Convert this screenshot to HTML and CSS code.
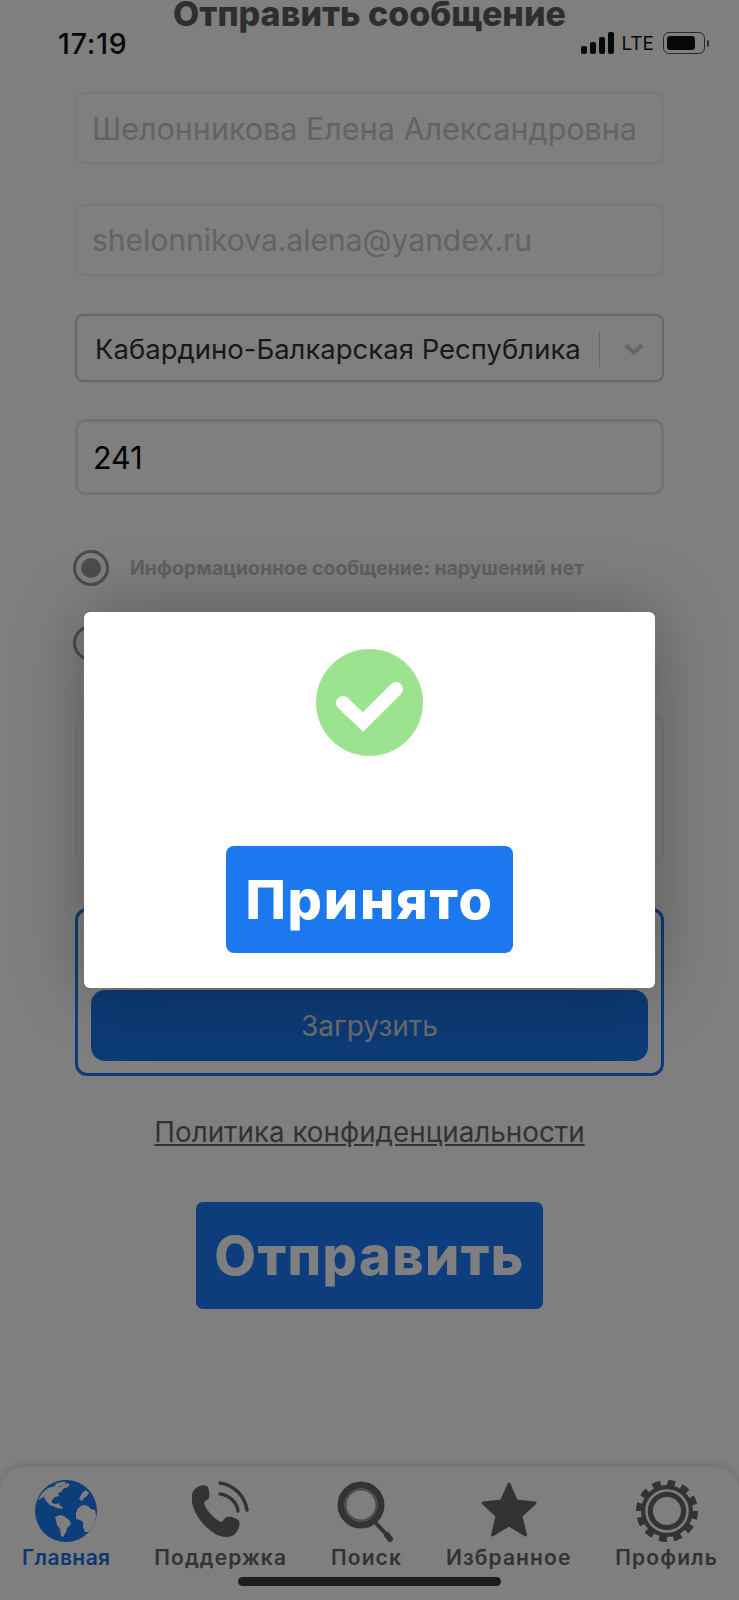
FILE: index.html
```html
<!DOCTYPE html>
<html lang="ru">
<head>
    <meta charset="UTF-8">
    <meta name="viewport" content="width=device-width, initial-scale=1.0">
    <title>Отправить сообщение</title>
    <link rel="stylesheet" href="styles.css">
</head>
<body>
    <div class="status-bar">
        <span class="status-time">17:19</span>
        <div class="status-icons">
            <div class="signal"><i class="bar-1"></i><i class="bar-2"></i><i class="bar-3"></i><i class="bar-4"></i></div>
            <span class="status-lte">LTE</span>
            <div class="battery"><i class="battery-level"></i></div>
            <i class="battery-nub"></i>
        </div>
    </div>

    <h1 class="page-title">Отправить сообщение</h1>

    <form class="form">
        <input class="field field-name" type="text" value="Шелонникова Елена Александровна" disabled>
        <input class="field field-email" type="text" value="shelonnikova.alena@yandex.ru" disabled>
        <div class="select">
            <span class="select-value">Кабардино-Балкарская Республика</span>
            <span class="select-sep"></span>
            <svg class="select-arrow" viewBox="0 0 20 12"><path d="M2 2l8 8 8-8"/></svg>
        </div>
        <input class="field field-code" type="text" value="241">
        <div class="radio-row radio-row-first">
            <span class="radio radio-on"></span>
            <span class="radio-label">Информационное сообщение: нарушений нет</span>
        </div>
        <div class="radio-row radio-row-second">
            <span class="radio"></span>
        </div>
        <div class="textarea"></div>
        <div class="upload-box">
            <button class="upload-button" type="button">Загрузить</button>
        </div>
        <a class="policy-link" href="#">Политика конфиденциальности</a>
        <button class="submit-button" type="button">Отправить</button>
    </form>

    <nav class="tabbar">
        <a class="tab tab-active">
            <svg class="tab-icon" width="62" height="62" viewBox="0 0 62 62">
                <circle class="globe-sea" cx="31" cy="31" r="31"/>
                <path class="globe-land" d="M3 20l4-7 6-5 7-2 5 1 3-2 5-2 2 2-4 3-2 0-3 4-3 1 1 3-4 1-3 3 0 3 4 1 3-1 1 3 3 1-1 2-5-1-4-2-3-1-4-4-2-4z"/>
                <path class="globe-land" d="M20 37l5-2 4 1 5 4 2 4-4 4-1 4-3 5-2-1-1-7-3-4-1-5z"/>
                <path class="globe-land" d="M41 33l2-5 5-3 5 1 3 3 4 1 1 6-1 6-3 6-4 4-3 0-2-5 0-5-3-2-4-1z"/>
                <path class="globe-land" d="M44 19l3-6 4-3 3 3-2 3-3 2-2 3z"/>
                <path class="globe-land" d="M20 4l6-2 5 0-1 2-4 2-5 1z"/>
            </svg>
            <span>Главная</span>
        </a>
        <a class="tab">
            <svg class="tab-icon" width="58" height="62" viewBox="0 0 58 62">
                <path class="icon-fill" d="M2 10c3-4 10-6 13-4 2 2 3 9 2 12-1 2-5 3-5 5 1 6 11 17 17 19 2 0 3-4 6-5 3-1 10 1 12 4 2 3-1 10-4 13-3 3-9 4-15 2C16 52 2 36 0 22c-1-5 0-9 2-12z"/>
                <path class="icon-line" d="M28 3c14 2 25 13 27 27"/>
                <path class="icon-line" d="M28 14c9 1 17 8 18 17"/>
            </svg>
            <span>Поддержка</span>
        </a>
        <a class="tab">
            <svg class="tab-icon" width="58" height="62" viewBox="0 0 58 62">
                <circle class="search-ring" cx="24" cy="25" r="20"/>
                <circle class="search-inner" cx="24" cy="25" r="15.500"/>
                <path class="search-handle" d="M38 42l10 11"/>
                <path class="search-tip" d="M50 55l3 4"/>
            </svg>
            <span>Поиск</span>
        </a>
        <a class="tab">
            <svg class="tab-icon" width="58" height="62" viewBox="0 0 58 62">
                <path class="star" d="M29 4l7.500 17 18.500 2-14 13 4.500 19L29 45 12.500 55l4.500-19L3 23l18.500-2z"/>
            </svg>
            <span>Избранное</span>
        </a>
        <a class="tab">
            <svg class="tab-icon" width="62" height="62" viewBox="0 0 62 62">
                <circle class="gear-teeth" cx="31" cy="31" r="27" pathLength="24"/>
                <circle class="icon-fill" cx="31" cy="31" r="26"/>
                <circle class="gear-gap" cx="31" cy="31" r="20.500"/>
                <circle class="gear-hole" cx="31" cy="31" r="14"/>
            </svg>
            <span>Профиль</span>
        </a>
    </nav>
    <div class="home-indicator"></div>

    <div class="overlay">
        <div class="modal">
            <svg class="modal-check" width="107" height="107" viewBox="0 0 107 107">
                <circle class="check-bg" cx="53.500" cy="53.500" r="53.500"/>
                <path class="check-mark" d="M27 54l20 19 33-33"/>
            </svg>
            <button class="accept-button" type="button">Принято</button>
        </div>
    </div>
</body>
</html>
```

FILE: styles.css
```css
* {
    box-sizing: border-box;
}
html, body {
    margin: 0;
    height: 1600px;
    overflow: hidden;
}
body {
    display: flex;
    flex-direction: column;
    position: relative;
    background-color: white;
    font-family: Inter, "Liberation Sans", sans-serif;
    color: black;
}

/* status bar sits on top of the title */
.status-bar {
    position: absolute;
    top: 28px;
    left: 58px;
    right: 30px;
    height: 30px;
    display: flex;
    align-items: center;
    justify-content: space-between;
    z-index: 2;
}
.status-time {
    font-size: 28.500px;
    font-weight: 500;
    letter-spacing: 0.8px;
    color: #111;
}
.status-icons {
    display: flex;
    align-items: center;
}
.signal {
    display: flex;
    align-items: flex-end;
    gap: 3px;
    height: 22px;
    margin-right: 7px;
}
.signal i {
    width: 6px;
    background-color: #111;
    border-radius: 2px;
}
.bar-1 { height: 8px; }
.bar-2 { height: 12px; }
.bar-3 { height: 17px; }
.bar-4 { height: 22px; }
.status-lte {
    font-size: 19px;
    color: #111;
    margin-right: 9px;
}
.battery {
    width: 42px;
    height: 22px;
    padding: 3px;
    border: 1.500px solid #555;
    border-radius: 6px;
}
.battery-level {
    display: block;
    width: 28px;
    height: 100%;
    background-color: #111;
    border-radius: 3px;
}
.battery-nub {
    width: 2px;
    height: 7px;
    margin-left: 2px;
    background-color: #555;
    border-radius: 0 2px 2px 0;
}

.page-title {
    margin: 0;
    height: 30px;
    line-height: 28px;
    font-size: 34px;
    font-weight: 800;
    text-align: center;
    color: #5c5c5c;
}

.form {
    display: flex;
    flex-direction: column;
    padding: 62px 75px 0;
}
.field {
    width: 100%;
    height: 72px;
    padding: 0 15px;
    border: 2px solid #f0f0f0;
    border-radius: 10px;
    background-color: white;
    font-family: Inter, "Liberation Sans", sans-serif;
    font-size: 30.500px;
    color: black;
}
.field:disabled {
    color: #c6c6c6;
    opacity: 1;
}
.field-email {
    margin-top: 40px;
    font-size: 30px;
}
.select {
    display: flex;
    align-items: center;
    height: 68px;
    margin-top: 38px;
    padding: 2px 18px 0;
    border: 2px solid #d0d0d0;
    border-radius: 8px;
    color: #333;
}
.select-value {
    font-size: 27.500px;
    white-space: nowrap;
}
.select-sep {
    width: 1px;
    height: 36px;
    margin-left: 18px;
    background-color: #ccc;
}
.select-arrow {
    width: 20px;
    height: 12px;
    margin-left: 24px;
}
.select-arrow path {
    fill: none;
    stroke: #ccc;
    stroke-width: 4;
}
.field-code {
    height: 76px;
    margin-top: 37px;
    border: 3px solid #dfe6e6;
}
.radio-row {
    display: flex;
    align-items: center;
    height: 36px;
}
.radio-row-first {
    margin-top: 55px;
}
.radio-row-second {
    margin-top: 39px;
}
.radio {
    display: flex;
    align-items: center;
    justify-content: center;
    width: 36px;
    height: 36px;
    margin-left: -2px;
    border: 3px solid #999;
    border-radius: 50%;
}
.radio-on::after {
    content: "";
    width: 20px;
    height: 20px;
    background-color: #999;
    border-radius: 50%;
}
.radio-label {
    margin-left: 21px;
    font-size: 19.400px;
    font-weight: 700;
    color: #c0c0c0;
    white-space: nowrap;
}
.textarea {
    height: 147px;
    margin-top: 55px;
    border: 2px solid #eee;
    border-radius: 10px;
}
.upload-box {
    display: flex;
    align-items: flex-end;
    height: 168px;
    margin-top: 45px;
    padding: 0 13px 12px;
    border: 3px solid #1a7af0;
    border-radius: 12px;
}
.upload-button {
    width: 100%;
    height: 71px;
    border: none;
    border-radius: 14px;
    background-color: #1a76ec;
    font-family: Inter, "Liberation Sans", sans-serif;
    font-size: 28px;
    color: #d8d8d8;
}
.policy-link {
    margin-top: 41px;
    height: 30px;
    line-height: 30px;
    font-size: 27.800px;
    text-align: center;
    color: #666;
    text-decoration: underline;
}
.submit-button {
    align-self: center;
    width: 347px;
    height: 107px;
    margin-top: 55px;
    border: none;
    border-radius: 7px;
    background-color: #1a7af8;
    font-family: Inter, "Noto Sans", sans-serif;
    font-size: 54px;
    font-weight: 800;
    letter-spacing: 1.400px;
    color: white;
}

.tabbar {
    display: flex;
    justify-content: space-between;
    margin-top: auto;
    height: 133px;
    padding: 13px 21px 0 22px;
    border-radius: 24px 24px 0 0;
    background-color: white;
    box-shadow: 0 -3px 10px rgba(0, 0, 0, 0.12);
}
.tab {
    display: flex;
    flex-direction: column;
    align-items: center;
    font-size: 21px;
    font-weight: 600;
    letter-spacing: 1.100px;
    line-height: 26px;
    color: #666;
}
.tab-active {
    letter-spacing: 0.4px;
    color: #1a6fdc;
}
.tab-icon {
    margin-bottom: 3px;
}
.icon-fill {
    fill: #666;
}
.icon-line {
    fill: none;
    stroke: #666;
    stroke-width: 3.500;
    stroke-linecap: round;
}
.globe-sea {
    fill: #1c7cf4;
}
.globe-land {
    fill: white;
}
.search-ring {
    fill: none;
    stroke: #666;
    stroke-width: 7;
}
.search-inner {
    fill: none;
    stroke: #999;
    stroke-width: 2;
}
.search-handle {
    stroke: #666;
    stroke-width: 4;
}
.search-tip {
    stroke: #666;
    stroke-width: 6;
    stroke-linecap: round;
}
.star {
    fill: #666;
    stroke: #666;
    stroke-width: 3;
    stroke-linejoin: round;
}
.gear-teeth {
    fill: none;
    stroke: #666;
    stroke-width: 8;
    stroke-dasharray: 1.100 0.900;
}
.gear-gap {
    fill: none;
    stroke: white;
    stroke-width: 2.500;
}
.gear-hole {
    fill: white;
}
.home-indicator {
    position: absolute;
    left: 238px;
    bottom: 14px;
    width: 263px;
    height: 9px;
    background-color: #3a3a3a;
    border-radius: 5px;
}

/* dim layer and dialog */
.overlay {
    position: absolute;
    inset: 0;
    display: flex;
    align-items: center;
    justify-content: center;
    background-color: rgba(0, 0, 0, 0.5);
    z-index: 3;
}
.modal {
    display: flex;
    flex-direction: column;
    align-items: center;
    width: 571px;
    height: 376px;
    padding-top: 37px;
    background-color: white;
    border-radius: 6px;
    box-shadow: 0 0 70px rgba(0, 0, 0, 0.3);
}
.check-bg {
    fill: #9be38f;
}
.check-mark {
    fill: none;
    stroke: white;
    stroke-width: 14;
    stroke-linecap: round;
    stroke-linejoin: miter;
}
.accept-button {
    width: 287px;
    height: 107px;
    margin-top: 90px;
    border: none;
    border-radius: 8px;
    background-color: #1b78ee;
    font-family: Inter, "Noto Sans", sans-serif;
    font-size: 54px;
    font-weight: 800;
    letter-spacing: 1.800px;
    color: white;
}
```
